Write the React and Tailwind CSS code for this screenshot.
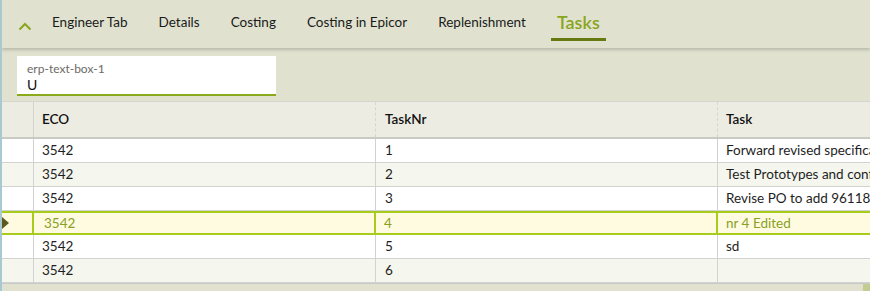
const tabs = ['Engineer Tab', 'Details', 'Costing', 'Costing in Epicor', 'Replenishment']

const rows = [
  { eco: '3542', nr: '1', task: 'Forward revised specifications to supplier' },
  { eco: '3542', nr: '2', task: 'Test Prototypes and confirm results' },
  { eco: '3542', nr: '3', task: 'Revise PO to add 9611817' },
  { eco: '3542', nr: '4', task: 'nr 4 Edited', selected: true },
  { eco: '3542', nr: '5', task: 'sd' },
  { eco: '3542', nr: '6', task: '' },
]

function Row({ row, index }) {
  if (row.selected) {
    return (
      <div className="grid h-[24px] grid-cols-[32px_342px_342px_1fr] border-y-2 border-[#a8cc1c] bg-[#fefbe0] text-[13.5px] text-[#8aa024]">
        <div className="flex items-center border-r-2 border-[#a8cc1c]">
          <svg width="7" height="12" viewBox="0 0 7 12">
            <path d="M0 0 L7 6 L0 12 Z" fill="#5a5a1e" />
          </svg>
        </div>
        <div className="flex items-center border-r-2 border-[#a8cc1c] pl-[10px]">{row.eco}</div>
        <div className="flex items-center border-r-2 border-[#a8cc1c] pl-[8px]">{row.nr}</div>
        <div className="flex items-center overflow-hidden whitespace-nowrap pl-[8px]">{row.task}</div>
      </div>
    )
  }
  const bg = index % 2 === 0 ? 'bg-white' : 'bg-[#f5f6ee]'
  return (
    <div className={`grid h-[24px] grid-cols-[32px_342px_342px_1fr] border-b border-[#d2d2d2] text-[13.5px] text-[#1e1e1e] ${bg}`}>
      <div className="border-r border-[#d2d2d2]" />
      <div className="flex items-center border-r border-[#d2d2d2] pl-[8px]">{row.eco}</div>
      <div className="flex items-center border-r border-[#d2d2d2] pl-[9px]">{row.nr}</div>
      <div className="flex items-center overflow-hidden whitespace-nowrap pl-[8px]">{row.task}</div>
    </div>
  )
}

export default function App() {
  return (
    <div className="h-[291px] w-[870px] overflow-hidden border-l-2 border-[#a9c9d2] bg-[#e0e2cf] font-['Lato','Liberation_Sans',sans-serif]">
      <div className="relative z-10 flex h-[48px] items-center pl-[16px] shadow-[0_2px_3px_rgba(0,0,0,0.18)]">
        <svg width="14" height="9" viewBox="0 0 14 9" className="mt-[4px]">
          <path d="M1.5 7.5 L7 2 L12.5 7.5" fill="none" stroke="#8aa51c" strokeWidth="2" />
        </svg>
        <div className="ml-[14px] flex h-full items-stretch gap-[19px]">
          {tabs.map((t) => (
            <div key={t} className="flex items-center px-[6px] pb-[4px] text-[13.5px] text-[#1a1a1a]">
              {t}
            </div>
          ))}
          <div className="flex items-center pb-[4px]">
            <div className="relative px-[6px] text-[18px] font-semibold text-[#8aa51c]">
              Tasks
              <div className="absolute -bottom-[5px] left-0 right-0 h-[3px] bg-[#667a12]" />
            </div>
          </div>
        </div>
      </div>

      <div className="h-[53px] pl-[15px] pt-[8px]">
        <div className="h-[40px] w-[259px] border-b-2 border-[#8aaa1c] bg-white pl-[10px] pt-[5px]">
          <div className="text-[12px] leading-[15px] text-[#6d6a66]">erp-text-box-1</div>
          <div className="text-[14px] leading-[17px] text-[#111]">U</div>
        </div>
      </div>

      <div className="border-t border-[#d6d6d0]">
        <div className="grid h-[37px] grid-cols-[32px_342px_342px_1fr] border-b-2 border-[#c9c9c5] bg-[#ecece3] text-[13.5px] font-semibold text-[#111]">
          <div className="border-r border-[#d2d2d2]" />
          <div className="flex items-center border-r border-dashed border-[#d6d6d0] pl-[8px]">ECO</div>
          <div className="flex items-center border-r border-dashed border-[#d6d6d0] pl-[9px]">TaskNr</div>
          <div className="flex items-center pl-[8px]">Task</div>
        </div>
        {rows.map((r, i) => (
          <Row key={i} row={r} index={i} />
        ))}
        <div className="flex h-[8px] border-t border-[#c9c9c5]">
          <div className="flex-1" />
          <div className="h-full w-[7px] bg-[#c5cc92]" />
        </div>
      </div>
    </div>
  )
}
